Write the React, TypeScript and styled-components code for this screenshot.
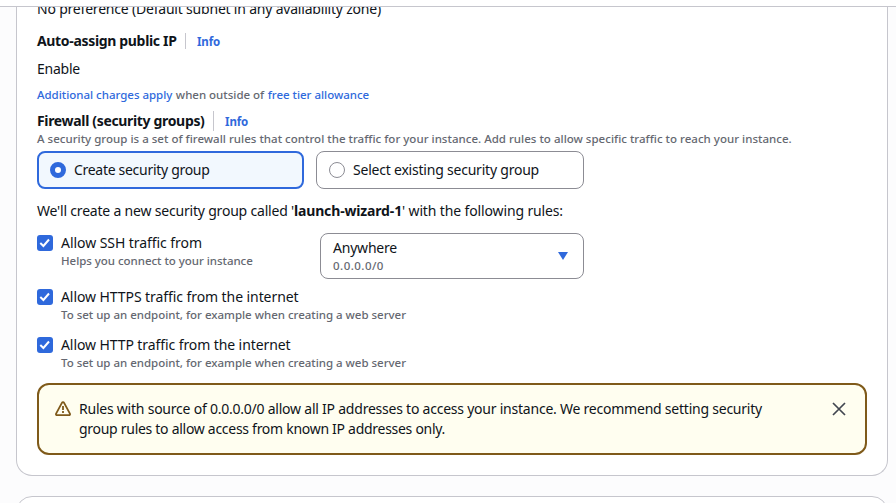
import React, { useState } from "react";
import styled, { createGlobalStyle } from "styled-components";

const color = {
  text: "#0f141a",
  muted: "#656871",
  link: "#2f69dc",
  accent: "#2f69dc",
  line: "#c6c6cd",
  control: "#8c8c94",
  warning: "#7f5a1a",
};

const GlobalStyle = createGlobalStyle`
  *, *::before, *::after { box-sizing: border-box; }
  body {
    margin: 0;
    overflow: hidden;
    background: #fcfcfd;
    color: ${color.text};
    font: 400 14px/20px "Noto Sans", "Open Sans", sans-serif;
  }
`;

const Page = styled.div`
  display: flex;
  flex-direction: column;
  height: 503px;
  overflow: hidden;
`;

const TopBar = styled.div`
  flex: none;
  height: 7px;
  background: #fff;
  border-bottom: 1px solid ${color.line};
`;

const Scroller = styled.main`
  flex: 1;
  min-height: 0;
  overflow: hidden;
  padding: 0 8px 0 16px;
`;

const Panel = styled.section`
  display: flex;
  flex-direction: column;
  height: 469px;
  padding: 0 20px;
  background: #fff;
  border: 1px solid ${color.line};
  border-top: 0;
  border-radius: 0 0 16px 16px;
`;

const NextPanel = styled.section`
  height: 60px;
  margin-top: 20px;
  background: #fff;
  border: 1px solid ${color.line};
  border-radius: 16px 16px 0 0;
`;

const Text = styled.div<{ $track?: number }>`
  letter-spacing: ${(p) => p.$track ?? 0}px;
  white-space: nowrap;
`;

const ClippedValue = styled(Text)`
  margin-top: -8px;
`;

const Value = styled(Text)`
  margin-top: 8px;
`;

const Hint = styled(Text)`
  font-size: 11.5px;
  font-weight: 500;
  line-height: 16px;
  color: ${color.muted};
`;

const ChargeNote = styled.div`
  display: flex;
  gap: 3.5px;
  margin-top: 8px;
`;

const LabelRow = styled.div<{ $top: number; $rule: number }>`
  display: flex;
  align-items: center;
  height: 20px;
  margin-top: ${(p) => p.$top}px;

  &::after {
    content: "";
    order: 1;
    width: 1px;
    height: ${(p) => p.$rule}px;
    margin: 0 11px 0 8.5px;
    background: ${color.line};
  }
`;

const Label = styled(Text)`
  font-weight: 700;
`;

const InfoLink = styled.a`
  order: 2;
  padding-top: 2px;
  font-size: 11.5px;
  line-height: 16px;
  font-weight: 700;
  letter-spacing: -0.1px;
  color: ${color.link};
`;

const Link = styled.a<{ $track: number }>`
  font-size: 11.5px;
  font-weight: 500;
  line-height: 16px;
  letter-spacing: ${(p) => p.$track}px;
  color: ${color.link};
  white-space: nowrap;
`;

const Tiles = styled.div`
  display: grid;
  grid-template-columns: 267px 268px;
  gap: 12px;
  margin-top: 4px;
`;

const Tile = styled.button<{ $on: boolean }>`
  display: flex;
  align-items: center;
  gap: 8px;
  height: 38px;
  padding: 0 ${(p) => (p.$on ? 11 : 12)}px;
  font: inherit;
  color: inherit;
  background: ${(p) => (p.$on ? "#f2f8fe" : "#fff")};
  border: ${(p) => (p.$on ? `2px solid ${color.accent}` : `1px solid ${color.control}`)};
  border-radius: 8px;
`;

const Radio = styled.span<{ $on: boolean }>`
  flex: none;
  width: 16px;
  height: 16px;
  background: #fff;
  border: ${(p) => (p.$on ? `5px solid ${color.accent}` : `1px solid ${color.control}`)};
  border-radius: 50%;
`;

const RuleIntro = styled.p`
  margin: 12px 0 0;
  white-space: nowrap;
`;

const Part = styled.span<{ $track: number; $bold?: boolean }>`
  font-weight: ${(p) => (p.$bold ? 700 : 400)};
  letter-spacing: ${(p) => p.$track}px;
`;

const SshRow = styled.div`
  display: grid;
  grid-template-columns: 283px 264px;
  height: 46px;
  margin-top: 12px;
`;

const CheckRow = styled.label<{ $top?: number }>`
  display: flex;
  align-items: flex-start;
  gap: 8px;
  margin-top: ${(p) => p.$top ?? 0}px;
`;

const Box = styled.span`
  display: grid;
  flex: none;
  place-items: center;
  width: 16px;
  height: 16px;
  margin-top: 2px;
  background: ${color.accent};
  border-radius: 3px;
`;

const Select = styled.button`
  display: flex;
  align-items: center;
  justify-content: space-between;
  height: 46px;
  padding: 0 15px 0 12px;
  font: inherit;
  color: inherit;
  text-align: left;
  background: #fff;
  border: 1px solid ${color.control};
  border-radius: 8px;
`;

const Caret = styled.svg`
  display: block;
  width: 10px;
  height: 8px;
  fill: ${color.accent};
`;

const Alert = styled.aside`
  display: flex;
  align-items: flex-start;
  height: 72px;
  margin-top: 12px;
  padding: 14px 18px 0 16px;
  background: #fffef0;
  border: 2px solid ${color.warning};
  border-radius: 12px;
`;

const WarningIcon = styled.svg`
  flex: none;
  width: 16px;
  height: 16px;
  margin-top: 2px;
  fill: none;
  stroke: ${color.warning};
  stroke-width: 1.8;
`;

const AlertBody = styled.div`
  flex: 1;
  margin-left: 8px;
`;

const Close = styled.button`
  display: block;
  width: 16px;
  height: 16px;
  margin-top: 2px;
  padding: 0;
  background: none;
  border: 0;
`;

const CloseIcon = styled.svg`
  display: block;
  fill: none;
  stroke: #424650;
  stroke-width: 1.7;
`;

function Check({ title, track, hint, hintTrack, top }: {
  title: string; track: number; hint: string; hintTrack: number; top?: number;
}) {
  return (
    <CheckRow $top={top}>
      <Box>
        <svg width="16" height="16" viewBox="0 0 16 16" fill="none" stroke="#fff" strokeWidth="2">
          <path d="M3.3 8.1 6.4 11 12 4.5" />
        </svg>
      </Box>
      <div>
        <Text $track={track}>{title}</Text>
        <Hint $track={hintTrack}>{hint}</Hint>
      </div>
    </CheckRow>
  );
}

const endpointHint = "To set up an endpoint, for example when creating a web server";

export default function App() {
  const [mode, setMode] = useState("create");
  return (
    <Page>
      <GlobalStyle />
      <TopBar />
      <Scroller>
        <Panel>
          <ClippedValue $track={-0.202}>No preference (Default subnet in any availability zone)</ClippedValue>
          <LabelRow $top={12} $rule={16}>
            <Label $track={-0.332}>Auto-assign public IP</Label>
            <InfoLink>Info</InfoLink>
          </LabelRow>
          <Value $track={-0.235}>Enable</Value>
          <ChargeNote>
            <Link $track={-0.02}>Additional charges apply</Link>
            <Hint $track={-0.01}>when outside of</Hint>
            <Link $track={-0.02}>free tier allowance</Link>
          </ChargeNote>
          <LabelRow $top={8} $rule={20}>
            <Label $track={-0.334}>Firewall (security groups)</Label>
            <InfoLink>Info</InfoLink>
          </LabelRow>
          <Hint $track={0.016}>
            A security group is a set of firewall rules that control the traffic for your instance. Add rules to allow specific traffic to reach your instance.
          </Hint>
          <Tiles>
            <Tile $on={mode === "create"} onClick={() => setMode("create")}>
              <Radio $on={mode === "create"} />
              <Text $track={-0.297}>Create security group</Text>
            </Tile>
            <Tile $on={mode === "existing"} onClick={() => setMode("existing")}>
              <Radio $on={mode === "existing"} />
              <Text $track={-0.215}>Select existing security group</Text>
            </Tile>
          </Tiles>
          <RuleIntro>
            <Part $track={-0.197}>We'll create a new security group called '</Part>
            <Part $track={-0.156} $bold>launch-wizard-1</Part>
            <Part $track={-0.134}>' with the following rules:</Part>
          </RuleIntro>
          <SshRow>
            <Check title="Allow SSH traffic from" track={-0.058} hint="Helps you connect to your instance" hintTrack={-0.035} />
            <Select>
              <div>
                <Text $track={-0.211}>Anywhere</Text>
                <Hint $track={0.46}>0.0.0.0/0</Hint>
              </div>
              <Caret viewBox="0 0 10 8"><path d="M0 0h10L5 8z" /></Caret>
            </Select>
          </SshRow>
          <Check top={8} title="Allow HTTPS traffic from the internet" track={-0.078} hint={endpointHint} hintTrack={-0.015} />
          <Check top={12} title="Allow HTTP traffic from the internet" track={-0.089} hint={endpointHint} hintTrack={-0.015} />
          <Alert>
            <WarningIcon viewBox="0 0 16 16">
              <path d="M6.9 1.9 1.1 12.6c-.4.8.1 1.5.9 1.5h12c.8 0 1.3-.7.9-1.5L9.1 1.9c-.5-.9-1.7-.9-2.2 0z" strokeLinejoin="round" />
              <path d="M8 5v4M8 10v2" />
            </WarningIcon>
            <AlertBody>
              <Text $track={-0.229}>Rules with source of 0.0.0.0/0 allow all IP addresses to access your instance. We recommend setting security</Text>
              <Text $track={-0.285}>group rules to allow access from known IP addresses only.</Text>
            </AlertBody>
            <Close aria-label="Dismiss">
              <CloseIcon width="16" height="16" viewBox="0 0 16 16"><path d="m2 2 12 12M14 2 2 14" /></CloseIcon>
            </Close>
          </Alert>
        </Panel>
        <NextPanel />
      </Scroller>
    </Page>
  );
}
